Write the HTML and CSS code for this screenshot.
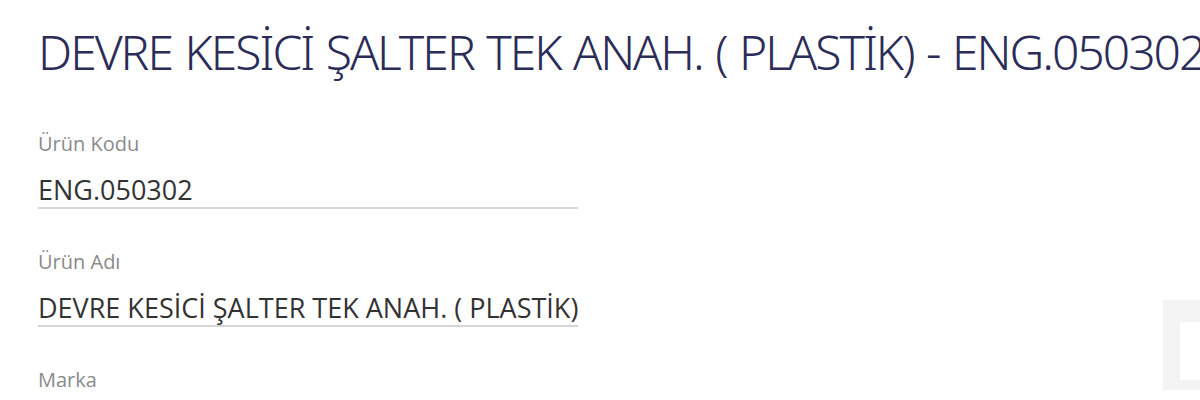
FILE: index.html
```html
<!DOCTYPE html>
<html lang="tr">
<head>
<meta charset="utf-8">
<link rel="stylesheet" href="styles.css">
</head>
<body>
<div class="page">
  <h1 class="title">DEVRE KESİCİ ŞALTER TEK ANAH. ( PLASTİK) - ENG.050302</h1>
  <div class="fields">
    <div class="field">
      <div class="label">Ürün Kodu</div>
      <div class="value">ENG.050302</div>
    </div>
    <div class="field">
      <div class="label">Ürün Adı</div>
      <div class="value">DEVRE KESİCİ ŞALTER TEK ANAH. ( PLASTİK)</div>
    </div>
    <div class="field">
      <div class="label">Marka</div>
    </div>
  </div>
  <div class="ghost"></div>
</div>
</body>
</html>
```
FILE: styles.css
```css
html, body {
  margin: 0;
  padding: 0;
  background: #fff;
  overflow: hidden;
}
.page {
  position: relative;
  width: 1200px;
  height: 400px;
  padding-left: 38px;
  box-sizing: border-box;
  font-family: "Open Sans", "Noto Sans", sans-serif;
}
.title {
  margin: 0;
  padding-top: 20px;
  font-family: "Noto Sans", "Open Sans", sans-serif;
  font-weight: 300;
  font-size: 48px;
  line-height: 64px;
  color: #2b2c57;
  white-space: nowrap;
  letter-spacing: -2px;
  word-spacing: 2px;
}
.fields {
  margin-top: 48px;
  width: 540px;
}
.field {
  margin-bottom: 41px;
}
.label {
  font-size: 20px;
  color: #8a8a8a;
  line-height: 24px;
}
.value {
  font-size: 27px;
  line-height: 34px;
  color: #333;
  margin-top: 17px;
  border-bottom: 2px solid #d6d6d6;
  white-space: nowrap;
}
.ghost {
  position: absolute;
  left: 1163px;
  top: 300px;
  width: 60px;
  height: 90px;
  border-style: solid;
  border-color: #f3f3f3;
  border-width: 22px 0 10px 17px;
  box-sizing: border-box;
}
```
